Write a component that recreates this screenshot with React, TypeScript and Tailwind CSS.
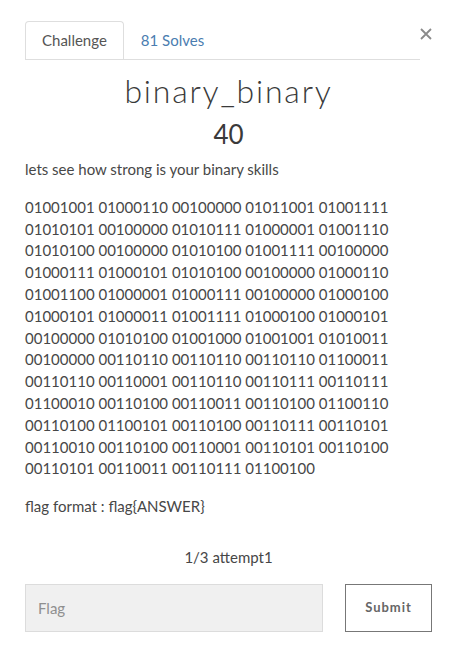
const binary = [
  '01001001 01000110 00100000 01011001 01001111',
  '01010101 00100000 01010111 01000001 01001110',
  '01010100 00100000 01010100 01001111 00100000',
  '01000111 01000101 01010100 00100000 01000110',
  '01001100 01000001 01000111 00100000 01000100',
  '01000101 01000011 01001111 01000100 01000101',
  '00100000 01010100 01001000 01001001 01010011',
  '00100000 00110110 00110110 00110110 01100011',
  '00110110 00110001 00110110 00110111 00110111',
  '01100010 00110100 00110011 00110100 01100110',
  '00110100 01100101 00110100 00110111 00110101',
  '00110010 00110100 00110001 00110101 00110100',
  '00110101 00110011 00110111 01100100',
];

export default function App() {
  return (
    <div
      className="w-[451px] h-[662px] bg-white pl-[25px] pr-[19px] pt-[21px] text-[#474747]"
      style={{ fontFamily: 'Lato, "Open Sans", sans-serif' }}
    >
      <div className="flex items-start">
        <ul className="flex flex-1 border-b border-[#dedede] text-[15px]">
          <li className="h-[38px] px-[16px] flex items-center border border-b-0 border-[#dedede] rounded-t-[4px] bg-white -mb-px text-[#555]">
            Challenge
          </li>
          <li className="h-[38px] px-[17px] flex items-center text-[#4a7db0]">81 Solves</li>
        </ul>
        <button className="w-[12px] mt-[7px] text-[#8a8a8a]">
          <svg viewBox="0 0 12 12" className="w-[12px] h-[12px]" stroke="currentColor" strokeWidth={1.8}>
            <path d="M1 1l10 10M11 1L1 11" />
          </svg>
        </button>
      </div>

      <h1 className="mt-[13px] text-center text-[32px] leading-[35px] font-light tracking-[1.8px] text-[#3a3a3a]">
        binary_binary
      </h1>
      <h2 className="mt-[11px] text-center text-[26px] leading-[30px] text-[#3a3a3a]">40</h2>

      <p className="mt-[10px] text-[15px] leading-[21.8px]">lets see how strong is your binary skills</p>

      <p className="mt-[16px] text-[15px] leading-[21.8px]">
        {binary.map((line, i) => (
          <span key={i} className="block">
            {line}
          </span>
        ))}
      </p>

      <p className="mt-[16px] text-[15px] leading-[21.8px]">flag format : flag{'{'}ANSWER{'}'}</p>

      <div className="mt-[29px] text-center text-[15px] leading-[21.8px]">1/3 attempt1</div>

      <div className="mt-[15px] flex">
        <input
          placeholder="Flag"
          className="w-[298px] h-[48px] bg-[#f0f0f0] border border-[#dcdcdc] px-[12px] text-[15px] placeholder:text-[#8f8f8f] outline-none"
          style={{ fontFamily: 'Lato, sans-serif' }}
        />
        <button className="ml-[22px] w-[87px] h-[48px] border border-[#777] text-[13px] font-bold tracking-[1px] text-[#666] bg-white">
          Submit
        </button>
      </div>
    </div>
  );
}
